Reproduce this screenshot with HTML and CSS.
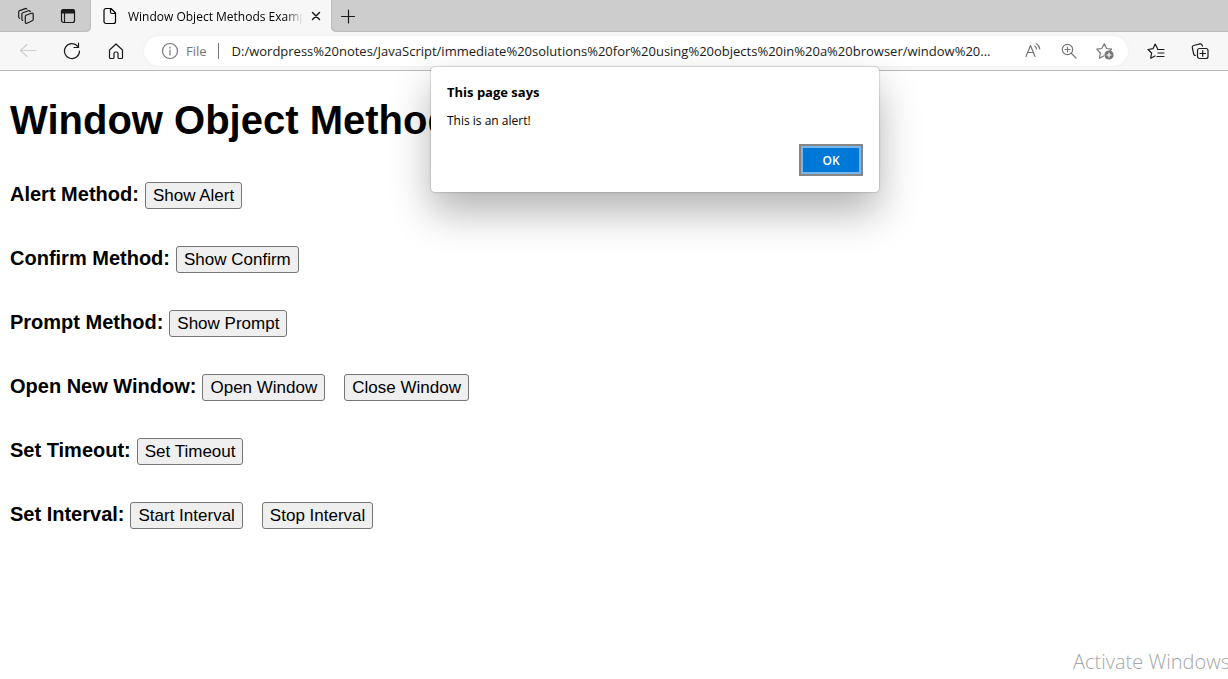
FILE: index.html
```html
<!DOCTYPE html>
<html lang="en">
<head>
    <meta charset="UTF-8">
    <meta name="viewport" content="width=device-width, initial-scale=1.0">
    <title>Window Object Methods Example</title>
    <link rel="stylesheet" href="styles.css">
</head>
<body>
    <header class="browser">
        <div class="tab-strip">
            <div class="tab-tools">
                <button class="icon-btn" aria-label="Workspaces">
                    <svg width="18" height="18" viewBox="0 0 18 18"><path d="M9 8.200l5.500-2c1-.3 1.700.1 1.700 1v5c0 .8-.3 1.300-1 1.600L10 16.200c-1 .4-1.700 0-1.700-1V9.300c0-.5.2-.9.7-1.100zM5.700 13.500c-.6-.2-.8-.6-.8-1.200V7c0-.6.3-1 .9-1.300l5.700-2c.9-.3 1.600 0 1.700.9M2.600 11.300c-.6-.2-.9-.6-.9-1.200V4.800c0-.6.300-1 .9-1.200l5.700-2c.8-.3 1.400-.1 1.600.6"/></svg>
                </button>
                <button class="icon-btn" aria-label="Tab actions">
                    <svg width="18" height="18" viewBox="0 0 18 18"><rect x="2.500" y="2.500" width="13" height="13" rx="2"/><path class="solid" d="M2.500 6V4.500a2 2 0 0 1 2-2h9a2 2 0 0 1 2 2V6z"/><path d="M5.500 6v9.500"/></svg>
                </button>
            </div>
            <div class="tab">
                <svg width="16" height="18" viewBox="0 0 16 18"><path d="M4 1.500h5l4.500 4.500v8.500a2 2 0 0 1-2 2H4a2 2 0 0 1-2-2v-11a2 2 0 0 1 2-2zM8.500 1.500V5a1.500 1.500 0 0 0 1.500 1.500h3.500"/></svg>
                <span class="tab-title">Window Object Methods Example</span>
                <button class="icon-btn tab-close" aria-label="Close tab">
                    <svg width="10" height="10" viewBox="0 0 10 10"><path d="m1.500 1.500 7 7m0-7-7 7"/></svg>
                </button>
            </div>
            <button class="icon-btn new-tab" aria-label="New tab">
                <svg width="16" height="16" viewBox="0 0 16 16"><path d="M1.500 8.500h13M8.500 2v13"/></svg>
            </button>
        </div>

        <div class="toolbar">
            <div class="nav">
                <button class="icon-btn back" aria-label="Back">
                    <svg width="18" height="18" viewBox="0 0 18 18"><path d="M17 8.500H1.500M8 2.500 1.500 8.500 8 14.500"/></svg>
                </button>
                <button class="icon-btn" aria-label="Refresh">
                    <svg width="18" height="18" viewBox="0 0 18 18"><path d="M16.500 9A7.500 7.500 0 1 1 14.800 4.300M15.500 1v4.500H11"/></svg>
                </button>
                <button class="icon-btn" aria-label="Home">
                    <svg width="18" height="18" viewBox="0 0 18 18"><path d="M2.500 8 9 2l6.500 6v7.500a1 1 0 0 1-1 1H12a1 1 0 0 1-1-1v-4a1.500 1.500 0 0 0-1.500-1.500h-1A1.500 1.500 0 0 0 7 11.500v4a1 1 0 0 1-1 1H3.500a1 1 0 0 1-1-1z"/></svg>
                </button>
            </div>
            <div class="address-bar">
                <svg width="18" height="18" viewBox="0 0 18 18"><circle cx="9" cy="9" r="7.500"/><path d="M9 8v5M9 5v1"/></svg>
                <label class="scheme" for="url">File</label>
                <input type="text" id="url" value="D:/wordpress%20notes/JavaScript/immediate%20solutions%20for%20using%20objects%20in%20a%20browser/window%20...">
                <div class="address-tools">
                    <button class="icon-btn" aria-label="Read aloud">
                        <svg width="18" height="18" viewBox="0 0 18 18"><path d="m2 14.500 4.500-11 4.500 11M3.600 10.500h5.800M11 4.200c1 .7 1.500 1.600 1.500 2.800M12.500 1.800c1.900 1.200 3 3 3.200 5.200"/></svg>
                    </button>
                    <button class="icon-btn" aria-label="Zoom">
                        <svg width="18" height="18" viewBox="0 0 18 18"><circle cx="7.500" cy="7.500" r="5.200"/><path d="m11.500 11.500 4.500 4.500M5 7.500h5M7.500 5v5"/></svg>
                    </button>
                    <button class="icon-btn" aria-label="Add to favorites">
                        <svg width="18" height="18" viewBox="0 0 18 18"><path d="m7.500 14-4 2.200.8-5.200L.8 7.200l5-.7L8.200 1.800l2.400 4.700 5 .7-1.700 1.600"/><circle class="solid" cx="13" cy="13" r="4"/><path class="plus" d="M11 13h4M13 11v4"/></svg>
                    </button>
                </div>
            </div>
            <div class="side-tools">
                <button class="icon-btn" aria-label="Favorites">
                    <svg width="18" height="18" viewBox="0 0 18 18"><path d="m8 14-4.300 2.200.9-5.200L1 7.500l5-.8L8.200 2l2.300 4.500M10.500 7.500h6.500M11 11h6M10 14.500h7"/></svg>
                </button>
                <button class="icon-btn" aria-label="Collections">
                    <svg width="18" height="18" viewBox="0 0 18 18"><rect x="6.500" y="6.500" width="10.500" height="10" rx="2"/><path d="M9 11.500h5.500M11.700 8.700v5.500M4.500 13.500c-1 0-1.600-.6-1.800-1.500L1.300 5.500c-.2-1 .3-1.800 1.300-2L9 1.900c1-.2 1.800.3 2.100 1.200l.4 1"/></svg>
                </button>
            </div>
        </div>
    </header>

    <main class="page">
        <h1>Window Object Methods Example</h1>

        <div class="method">
            <h3>Alert Method:</h3>
            <button>Show Alert</button>
        </div>
        <div class="method">
            <h3>Confirm Method:</h3>
            <button>Show Confirm</button>
        </div>
        <div class="method">
            <h3>Prompt Method:</h3>
            <button>Show Prompt</button>
        </div>
        <div class="method">
            <h3>Open New Window:</h3>
            <button>Open Window</button>
            <button>Close Window</button>
        </div>
        <div class="method">
            <h3>Set Timeout:</h3>
            <button>Set Timeout</button>
        </div>
        <div class="method">
            <h3>Set Interval:</h3>
            <button>Start Interval</button>
            <button>Stop Interval</button>
        </div>
    </main>

    <div class="alert" role="alertdialog" aria-labelledby="alertTitle">
        <div class="alert-title" id="alertTitle">This page says</div>
        <div class="alert-text">This is an alert!</div>
        <button class="ok">OK</button>
    </div>

    <div class="watermark">Activate Windows</div>
</body>
</html>
```
FILE: styles.css
```css
* {
    box-sizing: border-box;
}
body {
    margin: 0;
    min-height: 100vh;
    background: #fff;
    color: #000;
    font-family: "Liberation Sans", Arial, sans-serif;
    overflow: hidden;
}
svg {
    display: block;
    flex: none;
    fill: none;
    stroke: currentColor;
    stroke-width: 1.2;
    stroke-linecap: round;
    stroke-linejoin: round;
}
svg .solid {
    fill: currentColor;
}
svg .plus {
    stroke: #fff;
}

/* Browser window */
.browser {
    font-family: "Open Sans", "Noto Sans", sans-serif;
    background: #f7f7f7;
    border-bottom: 1px solid #b9b9b9;
}
.icon-btn {
    padding: 0;
    border: 0;
    background: none;
    color: #1b1b1b;
}
.tab-strip {
    display: flex;
    height: 32px;
    background: #f7f7f7;
}
.tab-tools {
    display: flex;
    gap: 24px;
    width: 91px;
    padding-left: 17px;
    background: #cdcdcd;
    border-bottom-right-radius: 5px;
    box-shadow: inset -1px -1px 1px #bebebe;
}
.tab {
    display: flex;
    align-items: center;
    width: 240px;
    padding: 0 10px 0 11px;
}
.tab-title {
    flex: 1;
    margin-left: 10px;
    font-size: 12px;
    white-space: nowrap;
    overflow: hidden;
    mask-image: linear-gradient(to right, #000 90%, transparent);
}
.tab-close {
    margin-left: 8px;
}
.tab-close svg {
    stroke-width: 1.5;
}
.new-tab {
    flex: 1;
    padding-left: 9px;
    background: #cdcdcd;
    border-bottom-left-radius: 5px;
    box-shadow: inset 1px -1px 1px #bebebe;
}
.toolbar {
    display: flex;
    align-items: center;
    height: 38px;
    padding-right: 19px;
}
.nav {
    display: flex;
    gap: 26px;
    width: 144px;
    padding-left: 19px;
}
.nav .back {
    color: #cfcfcf;
}
.address-bar {
    display: flex;
    flex: 1;
    align-items: center;
    height: 30px;
    padding: 0 14px 0 17px;
    border-radius: 15px;
    background: #fff;
    box-shadow: 0 0 3px #e8e8e8;
    color: #767676;
    font-size: 13px;
}
.scheme {
    margin-left: 7px;
    padding-right: 11px;
    border-right: 1px solid #767676;
    line-height: 16px;
}
.address-bar input {
    flex: 1;
    min-width: 0;
    margin-left: 13px;
    padding: 0;
    border: 0;
    outline: 0;
    background: none;
    color: #1b1b1b;
    font: inherit;
    text-overflow: ellipsis;
}
.address-tools {
    display: flex;
    gap: 18px;
    margin-left: 16px;
}
.address-tools .icon-btn {
    color: #767676;
}
.side-tools {
    display: flex;
    gap: 26px;
    margin-left: 19px;
}

/* Page content */
.page {
    padding: 26px 10px;
}
h1 {
    margin: 0 0 39px;
    font-size: 40px;
    line-height: 46px;
}
.method {
    display: flex;
    align-items: baseline;
    height: 27px;
    margin-bottom: 37px;
}
.method h3 {
    margin: 0;
    font-size: 20px;
    line-height: 22px;
}
.method button {
    height: 27px;
    margin-left: 6px;
    padding: 0 7px;
    border: 1px solid #767676;
    border-radius: 3px;
    background: #efefef;
    color: #000;
    font-family: inherit;
    font-size: 17px;
    line-height: 20px;
}
.method button + button {
    margin-left: 19px;
}

/* Alert box */
.alert {
    position: absolute;
    top: 67px;
    left: 431px;
    display: flex;
    flex-direction: column;
    width: 448px;
    padding: 16px;
    border-radius: 4px;
    background: #fff;
    box-shadow: 0 0 2px rgba(0, 0, 0, 0.4), 0 20px 40px rgba(0, 0, 0, 0.3);
    font-family: "Open Sans", "Noto Sans", sans-serif;
}
.alert-title {
    font-size: 13px;
    font-weight: bold;
    line-height: 18px;
}
.alert-text {
    margin-top: 12px;
    font-size: 12px;
    line-height: 16px;
}
.ok {
    align-self: flex-end;
    width: 64px;
    height: 32px;
    margin-top: 15px;
    border: 2px solid #858585;
    background: #0078d7;
    box-shadow: inset 0 0 0 2px #79b6ea;
    color: #fff;
    font-family: inherit;
    font-size: 12px;
    font-weight: 600;
}
.watermark {
    position: absolute;
    right: 0;
    bottom: 4px;
    width: 155px;
    overflow: hidden;
    color: #a6a6a6;
    font-family: "Open Sans", "Noto Sans", sans-serif;
    font-size: 20px;
    font-weight: 300;
    line-height: 26px;
    white-space: nowrap;
}
```
